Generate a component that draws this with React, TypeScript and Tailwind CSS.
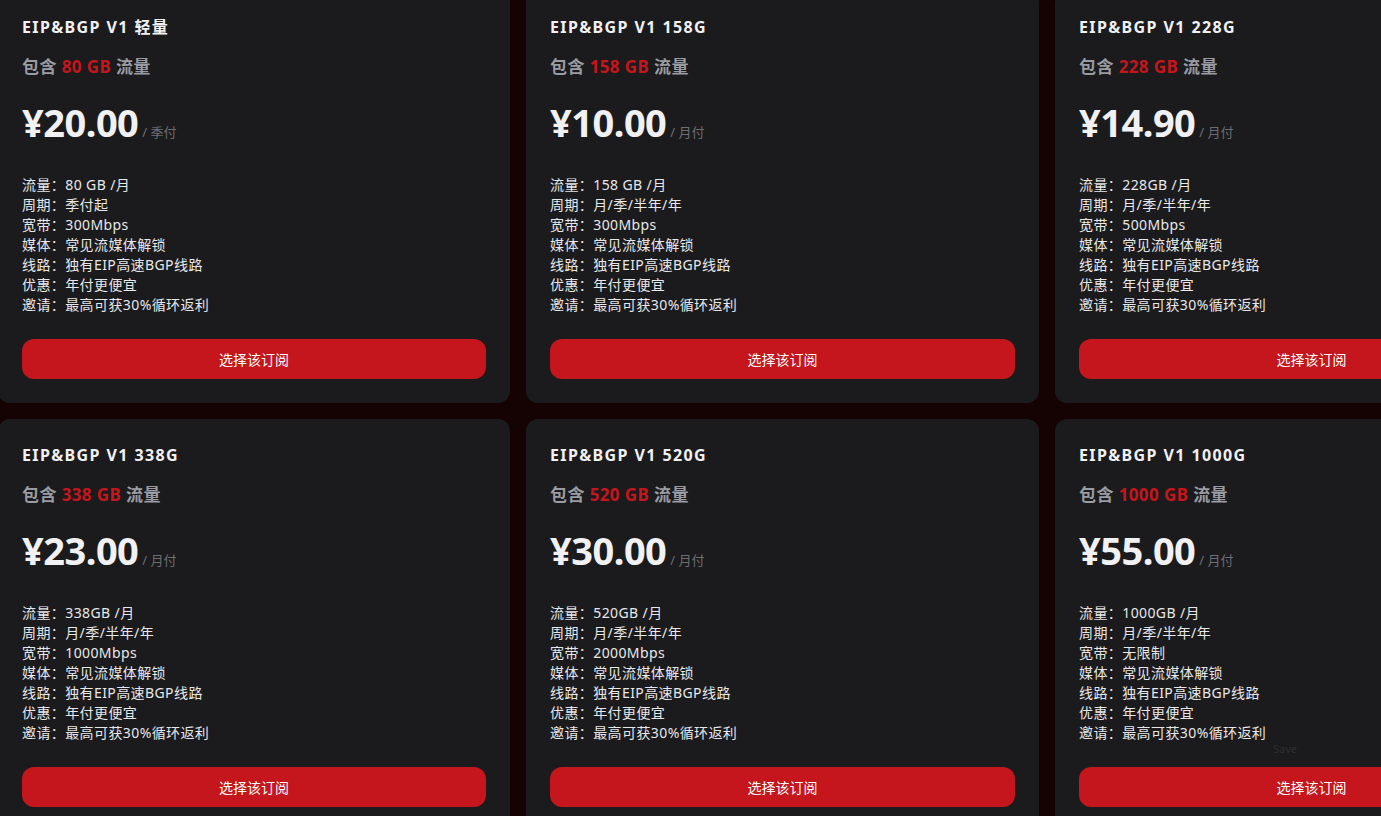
const plans = [
  { name: 'EIP&BGP V1 轻量', gb: '80 GB', price: '¥20.00', unit: '季付', traffic: '80 GB /月', cycle: '季付起', bw: '300Mbps' },
  { name: 'EIP&BGP V1 158G', gb: '158 GB', price: '¥10.00', unit: '月付', traffic: '158 GB /月', cycle: '月/季/半年/年', bw: '300Mbps' },
  { name: 'EIP&BGP V1 228G', gb: '228 GB', price: '¥14.90', unit: '月付', traffic: '228GB /月', cycle: '月/季/半年/年', bw: '500Mbps' },
  { name: 'EIP&BGP V1 338G', gb: '338 GB', price: '¥23.00', unit: '月付', traffic: '338GB /月', cycle: '月/季/半年/年', bw: '1000Mbps' },
  { name: 'EIP&BGP V1 520G', gb: '520 GB', price: '¥30.00', unit: '月付', traffic: '520GB /月', cycle: '月/季/半年/年', bw: '2000Mbps' },
  { name: 'EIP&BGP V1 1000G', gb: '1000 GB', price: '¥55.00', unit: '月付', traffic: '1000GB /月', cycle: '月/季/半年/年', bw: '无限制' },
]

type Plan = (typeof plans)[number]

function PlanCard({ plan }: { plan: Plan }) {
  const rows = [
    ['流量', plan.traffic],
    ['周期', plan.cycle],
    ['宽带', plan.bw],
    ['媒体', '常见流媒体解锁'],
    ['线路', '独有EIP高速BGP线路'],
    ['优惠', '年付更便宜'],
    ['邀请', '最高可获30%循环返利'],
  ]

  return (
    <div className="bg-[#1b1b1d] rounded-[12px] p-6 h-[412px] flex flex-col">
      {/* Title */}
      <h3 className="text-[16px] leading-6 font-bold text-[#f1f1f3] tracking-[1.4px]">{plan.name}</h3>

      {/* Included traffic */}
      <p className="mt-4 text-[17px] leading-6 font-bold text-[#9a9ca3] tracking-[0.4px]">
        包含 <span className="text-[#c4161c]">{plan.gb}</span> 流量
      </p>

      {/* Price */}
      <div className="mt-[17px] flex items-baseline gap-1 h-[52px]">
        <span className="text-[38px] leading-[52px] font-bold text-[#f1f1f3] tracking-[-0.5px]">{plan.price}</span>
        <span className="text-[13px] text-[#6d6e73]">/ {plan.unit}</span>
      </div>

      {/* Specs */}
      <ul className="mt-[27px] text-[14px] leading-5 text-[#e8e8ea] tracking-[0.4px]">
        {rows.map(([k, v]) => (
          <li key={k}>
            {k}：{v}
          </li>
        ))}
      </ul>

      {/* Action */}
      <button className="mt-auto h-10 w-full rounded-[12px] bg-[#c4161c] text-[14px] text-white">
        选择该订阅
      </button>
    </div>
  )
}

export default function App() {
  return (
    <div
      className="relative h-[816px] w-[1381px] overflow-hidden bg-[#150203]"
      style={{ fontFamily: '"Noto Sans", "Noto Sans CJK SC", sans-serif' }}
    >
      <div className="-mt-[9px] -ml-[2px] grid grid-cols-[512px_513px_513px] gap-4">
        {plans.map((p) => (
          <PlanCard key={p.name} plan={p} />
        ))}
      </div>
      <span className="absolute left-[1273px] top-[741px] text-[11px] text-[#2e2e31]">Save</span>
    </div>
  )
}
